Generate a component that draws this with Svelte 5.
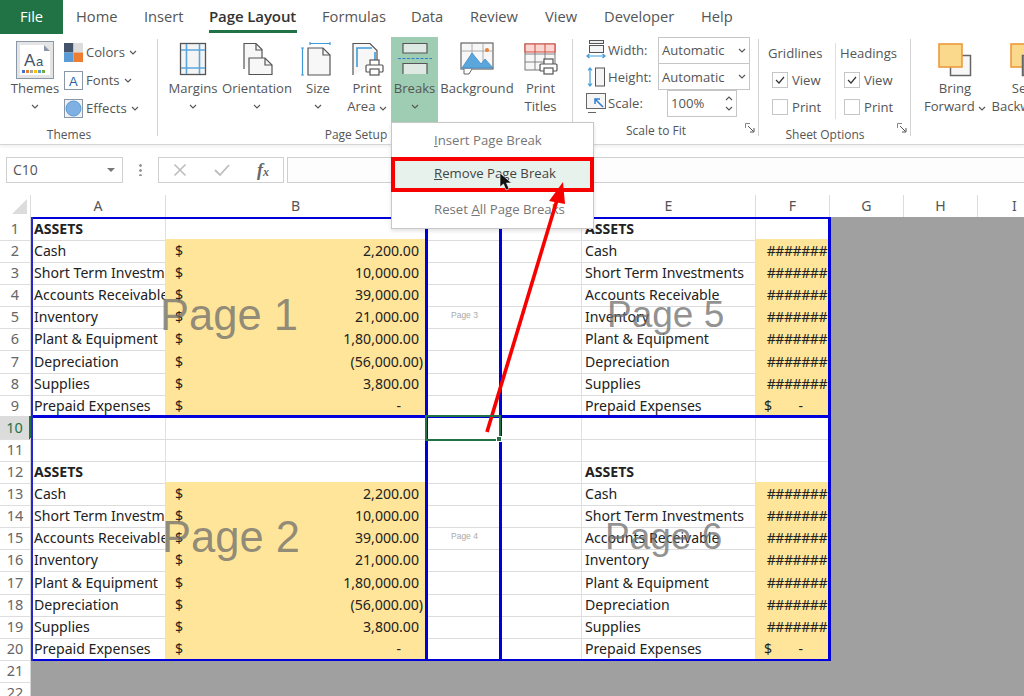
<script>
	// sheet model: columns and the repeated ledger block
	const columns = ['A', 'B', 'C', 'D', 'E', 'F', 'G', 'H', 'I'];
	const labels = [
		'Cash',
		'Short Term Investments',
		'Accounts Receivable',
		'Inventory',
		'Plant & Equipment',
		'Depreciation',
		'Supplies',
		'Prepaid Expenses'
	];
	const amounts = ['2,200.00', '10,000.00', '39,000.00', '21,000.00', '1,80,000.00', '(56,000.00)', '3,800.00', '-'];

	const rows = [];
	for (let n = 1; n <= 22; n++) {
		let index = -1;
		if (n >= 2 && n <= 9) index = n - 2;
		if (n >= 13 && n <= 20) index = n - 13;
		rows.push({
			n,
			heading: n === 1 || n === 12,
			label: index >= 0 ? labels[index] : '',
			amount: index >= 0 ? amounts[index] : '',
			filled: index >= 0,
			last: index === 7,
			negative: index === 5,
			outside: n > 20
		});
	}
</script>

{#snippet chevron()}
	<svg class="chev" viewBox="0 0 8 5" width="8" height="5"><path d="M1 1l3 3 3-3" fill="none" stroke="#555" stroke-width="1.1" /></svg>
{/snippet}

{#snippet launcher()}
	<svg class="launcher" viewBox="0 0 10 10" width="10" height="10">
		<path d="M.5 5V.5H5" fill="none" stroke="#888" />
		<path d="M3 3l5.5 5.5M9 5v4H5" fill="none" stroke="#555" />
	</svg>
{/snippet}

{#snippet printer(x, y)}
	<g transform="translate({x} {y})" fill="#fff" stroke="#555" stroke-width="1.2">
		<rect x="4" y="0" width="9" height="6" />
		<rect x="0" y="5" width="17" height="7" rx="1" />
		<rect x="4" y="9" width="9" height="6" />
	</g>
{/snippet}

<div class="app">
	<nav class="tabs">
		<div class="tab file">File</div>
		<div class="tab home">Home</div>
		<div class="tab insert">Insert</div>
		<div class="tab active">Page Layout</div>
		<div class="tab formulas">Formulas</div>
		<div class="tab data">Data</div>
		<div class="tab review">Review</div>
		<div class="tab view">View</div>
		<div class="tab developer">Developer</div>
		<div class="tab">Help</div>
	</nav>

	<section class="ribbon">
		<div class="group g-themes">
			<div class="body">
				<div class="big b-themes">
					<div class="theme-icon">
						<svg viewBox="0 0 36 36" width="36" height="36">
							<path d="M3 3h24l6 6v24H3z" fill="#fff" />
							<path d="M27 3l6 6h-6z" fill="#8a97a8" />
							<text x="7" y="24" font-size="17" fill="#44546a" font-family="Liberation Sans, sans-serif">A</text>
							<text x="19" y="24" font-size="13" fill="#44546a" font-family="Liberation Sans, sans-serif">a</text>
							<rect x="5" y="28" width="3" height="3" fill="#4472c4" />
							<rect x="9" y="28" width="3" height="3" fill="#ed7d31" />
							<rect x="13" y="28" width="3" height="3" fill="#a5a5a5" />
							<rect x="17" y="28" width="3" height="3" fill="#ffc000" />
							<rect x="21" y="28" width="3" height="3" fill="#5b9bd5" />
							<rect x="25" y="28" width="3" height="3" fill="#70ad47" />
						</svg>
					</div>
					<span class="label">Themes</span>
					{@render chevron()}
				</div>
				<div class="small-list">
					<div class="small">
						<svg viewBox="0 0 19 19" width="19" height="19">
							<rect width="9.5" height="9.5" fill="#44546a" />
							<rect x="9.5" width="9.5" height="9.5" fill="#dcdcdc" />
							<rect y="9.5" width="9.5" height="9.5" fill="#5b9bd5" />
							<rect x="9.5" y="9.5" width="9.5" height="9.5" fill="#ed7d31" />
						</svg>
						<span>Colors</span>{@render chevron()}
					</div>
					<div class="small">
						<svg viewBox="0 0 19 19" width="19" height="19">
							<rect x=".5" y=".5" width="18" height="18" fill="#fff" stroke="#8a97a8" />
							<text x="5" y="15" font-size="13" fill="#2a5f9e" font-family="Liberation Sans, sans-serif">A</text>
						</svg>
						<span>Fonts</span>{@render chevron()}
					</div>
					<div class="small">
						<svg viewBox="0 0 19 19" width="19" height="19">
							<rect x=".5" y=".5" width="18" height="18" fill="#f2f2f2" stroke="#8a97a8" />
							<circle cx="9.5" cy="9.5" r="7.5" fill="#7eb0e3" stroke="#5b9bd5" />
						</svg>
						<span>Effects</span>{@render chevron()}
					</div>
				</div>
			</div>
			<div class="caption">Themes</div>
		</div>

		<div class="group g-setup">
			<div class="body">
				<div class="big b-margins">
					<svg class="icon" viewBox="0 0 34 34" width="34" height="34">
						<rect x="4.5" y="1.5" width="25" height="31" fill="#f4f4f4" stroke="#555" stroke-width="1.3" />
						<path d="M5 8h24M5 26h24M10.5 2v30M23.5 2v30" stroke="#5ba7dd" stroke-width="1.6" fill="none" />
					</svg>
					<span class="label">Margins</span>
					{@render chevron()}
				</div>
				<div class="big b-orientation">
					<svg class="icon" viewBox="0 0 34 34" width="34" height="34">
						<path d="M4 27V1.500h12l6 6V16" fill="#f7f7f7" stroke="#555" stroke-width="1.2" />
						<path d="M16 2v6h6" fill="none" stroke="#555" stroke-width="1.2" />
						<path d="M9 16h16l7 7v9.500H9z" fill="#f7f7f7" stroke="#555" stroke-width="1.2" />
						<path d="M25 16v7h7" fill="none" stroke="#555" stroke-width="1.2" />
					</svg>
					<span class="label">Orientation</span>
					{@render chevron()}
				</div>
				<div class="big b-size">
					<svg class="icon" viewBox="0 0 34 34" width="34" height="34">
						<path d="M9 1.500h20M9 0v3M29 0v3M1.500 6v27M0 6h3M0 33h3" stroke="#3f9bd8" stroke-width="1.2" fill="none" />
						<path d="M7 33V6h15l7 7v20z" fill="#f7f7f7" stroke="#555" stroke-width="1.2" />
						<path d="M22 6v7h7" fill="none" stroke="#555" stroke-width="1.2" />
					</svg>
					<span class="label">Size</span>
					{@render chevron()}
				</div>
				<div class="big b-print">
					<svg class="icon" viewBox="0 0 34 34" width="34" height="34">
						<path d="M3 33V1.500h17l7 7V20" fill="#f7f7f7" stroke="#555" stroke-width="1.2" />
						<path d="M7 25V6h15M25 10v8" fill="none" stroke="#3f9bd8" stroke-width="1.6" />
						{@render printer(16, 18)}
					</svg>
					<span class="label">Print<br />Area {@render chevron()}</span>
				</div>
				<div class="big b-breaks">
					<svg class="icon" viewBox="0 0 34 34" width="34" height="34">
						<path d="M5 1.500h24V11H5z" fill="#dfe9e3" stroke="#555" stroke-width="1.2" />
						<path d="M0 16.500h34" stroke="#2d7fd0" stroke-width="1.2" stroke-dasharray="3 1.500" />
						<path d="M5 32V21.500h24V32" fill="#dfe9e3" stroke="#555" stroke-width="1.2" />
					</svg>
					<span class="label">Breaks</span>
					{@render chevron()}
				</div>
				<div class="big b-background">
					<svg class="icon" viewBox="0 0 34 34" width="34" height="34">
						<rect x="1" y="1" width="32" height="26" fill="#f7f7f7" stroke="#666" stroke-width="1.2" />
						<path d="M1 9h32M12 1v26M23 1v26" stroke="#999" stroke-width=".8" />
						<path d="M2 26l10-15 9 11 4-5 8 9z" fill="#5ba7dd" stroke="#3e86c0" stroke-width=".8" />
						<circle cx="27" cy="8" r="2" fill="#ed7d31" />
						<path d="M4 27v5h5l3-5" fill="#fff" stroke="#666" />
					</svg>
					<span class="label">Background</span>
				</div>
				<div class="big b-titles">
					<svg class="icon" viewBox="0 0 34 34" width="34" height="34">
						<rect x="1" y="2" width="30" height="26" fill="#f7f7f7" stroke="#777" />
						<path d="M1 12h30M1 20h22M11 2v26M21 2v26" stroke="#777" stroke-width=".9" />
						<path d="M1 2h30v8H1z" fill="#f8d7d2" stroke="#d9463a" stroke-width="1.2" />
						<path d="M11 2v8M21 2v8" stroke="#d9463a" />
						{@render printer(16, 17)}
					</svg>
					<span class="label">Print<br />Titles</span>
				</div>
			</div>
			<div class="caption setup-caption">Page Setup</div>
		</div>

		<div class="group g-scale">
			<div class="scale-grid">
				<svg viewBox="0 0 20 20" width="20" height="20">
					<rect x="3.500" y=".5" width="14" height="3" fill="#eee" stroke="#555" />
					<rect x="3.500" y="5.500" width="14" height="7" fill="#f5f5f5" stroke="#555" />
					<path d="M1 16h18M3.500 14l-2.500 2 2.500 2M16.500 14l2.500 2-2.500 2" fill="none" stroke="#3f9bd8" stroke-width="1.2" />
				</svg>
				<span>Width:</span>
				<div class="select wide">Automatic {@render chevron()}</div>
				<svg viewBox="0 0 20 20" width="20" height="20">
					<rect x="9.500" y="1" width="9" height="18" fill="#f5f5f5" stroke="#555" />
					<path d="M4 1v18M2 3.500l2-2.500 2 2.500M2 16.500l2 2.500 2-2.500" fill="none" stroke="#3f9bd8" stroke-width="1.2" />
				</svg>
				<span>Height:</span>
				<div class="select wide">Automatic {@render chevron()}</div>
				<svg viewBox="0 0 20 20" width="20" height="20">
					<rect x=".5" y=".5" width="19" height="15" fill="#f5f5f5" stroke="#666" />
					<path d="M2 19.500h8" stroke="#666" />
					<path d="M9 6l8 8M9 11V6h5" fill="none" stroke="#2d7fd0" stroke-width="1.500" />
				</svg>
				<span>Scale:</span>
				<div class="select percent">
					100%
					<div class="spin">
						<svg viewBox="0 0 8 5" width="8" height="5"><path d="M1 4l3-3 3 3" fill="none" stroke="#555" stroke-width="1.1" /></svg>
						{@render chevron()}
					</div>
				</div>
			</div>
			<div class="caption">Scale to Fit</div>
			{@render launcher()}
		</div>

		<div class="group g-sheet">
			<div class="options">
				<div class="option-col">
					<div class="option-title">Gridlines</div>
					<div class="check"><span class="box"><svg viewBox="0 0 10 8" width="10" height="8"><path d="M1 4l3 3 5-6" fill="none" stroke="#333" stroke-width="1.2" /></svg></span>View</div>
					<div class="check"><span class="box"></span>Print</div>
				</div>
				<div class="option-col second">
					<div class="option-title">Headings</div>
					<div class="check"><span class="box"><svg viewBox="0 0 10 8" width="10" height="8"><path d="M1 4l3 3 5-6" fill="none" stroke="#333" stroke-width="1.2" /></svg></span>View</div>
					<div class="check"><span class="box"></span>Print</div>
				</div>
			</div>
			<div class="caption">Sheet Options</div>
			{@render launcher()}
		</div>

		<div class="group g-arrange">
			<div class="body">
				<div class="big b-arrange">
					<svg class="icon arrange-icon" viewBox="0 0 34 34" width="34" height="34">
						<rect x="12.500" y="12.500" width="20" height="20" fill="#f7f7f7" stroke="#666" stroke-width="1.500" />
						<rect x="1" y="1" width="23" height="23" fill="#fad98d" stroke="#ed9a3c" stroke-width="1.600" />
					</svg>
					<span class="label">Bring<br />Forward {@render chevron()}</span>
				</div>
				<div class="big b-arrange">
					<svg class="icon arrange-icon" viewBox="0 0 34 34" width="34" height="34">
						<rect x="1" y="1" width="23" height="23" fill="#fad98d" stroke="#ed9a3c" stroke-width="1.600" />
						<rect x="12.500" y="12.500" width="20" height="20" fill="#888" stroke="#666" stroke-width="1.500" />
					</svg>
					<span class="label">Send<br />Backward {@render chevron()}</span>
				</div>
			</div>
		</div>
	</section>

	<section class="formula-bar">
		<div class="name-box">C10<span class="caret"></span></div>
		<div class="dots"></div>
		<div class="fx-box">
			<svg viewBox="0 0 14 14" width="14" height="14"><path d="M1.500 1.500l11 11M12.500 1.500l-11 11" stroke="#bdbdbd" stroke-width="1.600" /></svg>
			<svg viewBox="0 0 16 14" width="16" height="14"><path d="M1 7l5 5 9-10" fill="none" stroke="#bdbdbd" stroke-width="1.800" /></svg>
			<span class="fx">f<small>x</small></span>
		</div>
		<div class="formula-input"></div>
	</section>

	<section class="sheet">
		<div class="col-heads">
			<div class="corner"><span></span></div>
			{#each columns as c}
				<div class="col-head" class:sel={c === 'C'}>{c}</div>
			{/each}
		</div>
		{#each rows as r}
			<div class="row">
				<div class="row-head" class:sel={r.n === 10}>{r.n}</div>
				{#if r.outside}
					<div class="outside"></div>
				{:else}
					<div class="cell clip" class:bold={r.heading}>{r.heading ? 'ASSETS' : r.label}</div>
					<div class="cell" class:fill={r.filled}>
						{#if r.filled}
							<span class="dollar">$</span>
							<span class="amount" class:neg={r.negative} class:dash={r.last}>{r.amount}</span>
						{/if}
					</div>
					<div class="cell" class:selected={r.n === 10}></div>
					<div class="cell"></div>
					<div class="cell" class:bold={r.heading}>{r.heading ? 'ASSETS' : r.label}</div>
					<div class="cell" class:fill={r.filled}>
						{#if r.last}
							<span class="dollar short">$</span>
							<span class="amount dash-f">-</span>
						{:else if r.filled}
							<span class="hashes">#######</span>
						{/if}
					</div>
					<div class="outside"></div>
				{/if}
			</div>
		{/each}

		<!-- page break preview overlay -->
		<div class="break h top"></div>
		<div class="break h middle"></div>
		<div class="break h bottom"></div>
		<div class="break v left"></div>
		<div class="break v c1"></div>
		<div class="break v c2"></div>
		<div class="break v right"></div>

		<div class="mark big-mark p1">Page 1</div>
		<div class="mark big-mark p2">Page 2</div>
		<div class="mark big-mark wide-col p5">Page 5</div>
		<div class="mark big-mark wide-col p6">Page 6</div>
		<div class="mark tiny p3">Page 3</div>
		<div class="mark tiny p4">Page 4</div>
	</section>

	<div class="menu">
		<div class="item"><span class="dim"><u>I</u>nsert Page Break</span></div>
		<div class="item hot"><span><u>R</u>emove Page Break</span></div>
		<div class="item"><span class="dim">Reset <u>A</u>ll Page Breaks</span></div>
	</div>

	<svg class="annotation" viewBox="0 0 1024 696" width="1024" height="696">
		<path d="M487 432L557 200" stroke="#f70000" stroke-width="3.600" fill="none" />
		<path d="M563 182L549 201 565 204z" fill="#f70000" />
		<path d="M500 173v14l3.500-3 2.500 6 3-1.300-2.500-5.700h5z" fill="#111" stroke="#fff" stroke-width=".6" />
	</svg>
</div>

<style>
	:global(body) {
		margin: 0;
		background: #fff;
	}

	.app {
		position: relative;
		width: 1024px;
		height: 696px;
		overflow: hidden;
		font-family: 'Open Sans', 'Noto Sans', sans-serif;
		color: #555;
		background: #fff;
	}

	/* tabs */
	.tabs {
		display: flex;
		height: 37px;
		font-size: 14.7px;
		color: #555;
	}

	.tab {
		height: 34px;
		line-height: 33px;
		box-sizing: border-box;
	}

	.file {
		width: 63px;
		background: #217346;
		color: #fff;
		text-align: center;
		margin-right: 13px;
	}

	.home {
		width: 68px;
	}

	.insert {
		width: 65px;
	}

	.active {
		width: 88px;
		margin-right: 25px;
		font-weight: 600;
		color: #333;
		white-space: nowrap;
		border-bottom: 3px solid #217346;
		height: 33px;
		font-size: 15px;
		letter-spacing: -0.1px;
	}

	.formulas {
		width: 89px;
	}

	.data {
		width: 59px;
	}

	.review {
		width: 75px;
	}

	.view {
		width: 59px;
	}

	.developer {
		width: 97px;
	}

	/* ribbon */
	.ribbon {
		display: flex;
		height: 108px;
		font-size: 13.1px;
		line-height: 18px;
		border-bottom: 1px solid #d5d5d5;
		box-shadow: 0 2px 3px rgba(0, 0, 0, 0.06);
		box-sizing: border-box;
		color: #555;
	}

	.group {
		position: relative;
		display: flex;
		flex-direction: column;
		flex: none;
		box-sizing: border-box;
		height: 102px;
	}

	.group::after {
		content: '';
		position: absolute;
		right: 0;
		top: 2px;
		bottom: 3px;
		width: 1px;
		background: #d4d4d4;
	}

	.body {
		display: flex;
		height: 85px;
		flex: none;
	}

	.caption {
		font-size: 12px;
		line-height: 16px;
		text-align: center;
		margin-top: 5px;
		padding-right: 20px;
	}

	.setup-caption {
		padding-right: 26px;
	}

	.launcher {
		position: absolute;
		right: 4px;
		bottom: 6px;
	}

	.g-themes {
		width: 158px;
	}

	.g-setup {
		width: 415px;
		padding-left: 7px;
	}

	.g-scale {
		width: 186px;
	}

	.g-sheet {
		width: 152px;
	}

	.g-arrange {
		width: 120px;
	}

	.g-arrange::after {
		display: none;
	}

	.big {
		display: flex;
		flex-direction: column;
		align-items: center;
		flex: none;
		white-space: nowrap;
		text-align: center;
	}

	.icon {
		margin-top: 5px;
		margin-bottom: 3px;
		flex: none;
	}

	.label {
		display: block;
	}

	.big > .chev {
		margin-top: 7px;
	}

	.b-themes {
		width: 70px;
	}

	.theme-icon {
		width: 36px;
		height: 36px;
		margin-top: 4px;
		background: #e4e4e4;
		border: 1px solid #8a97a8;
		box-sizing: content-box;
	}

	.b-margins {
		width: 56px;
	}

	.b-orientation {
		width: 72px;
	}

	.b-size {
		width: 50px;
	}

	.b-print {
		width: 48px;
	}

	.b-breaks {
		width: 47px;
		background: #9fcdb3;
	}

	.b-background {
		width: 78px;
	}

	.b-titles {
		width: 49px;
	}

	.b-arrange {
		width: 72px;
	}

	.b-arrange:first-child {
		margin-left: 8px;
	}

	.arrange-icon {
		margin-top: 6px;
		margin-bottom: 2px;
	}

	.small-list {
		display: flex;
		flex-direction: column;
		margin-left: -6px;
		padding-top: 5px;
		gap: 8px;
	}

	.small {
		display: flex;
		align-items: center;
		gap: 3px;
		height: 20px;
	}

	.small .chev {
		margin-left: 1px;
	}

	/* scale to fit */
	.scale-grid {
		display: grid;
		grid-template-columns: 20px 48px 92px;
		grid-auto-rows: 26.5px;
		column-gap: 2px;
		align-items: center;
		height: 85px;
		padding-left: 13px;
	}

	.select {
		display: flex;
		align-items: center;
		justify-content: space-between;
		box-sizing: border-box;
		height: 27px;
		padding: 0 3px 0 3px;
		background: #fff;
		border: 1px solid #c6c6c6;
		font-size: 13.1px;
	}

	.wide {
		width: 92px;
	}

	.percent {
		width: 70px;
		margin-left: 9px;
		padding-left: 3px;
	}

	.spin {
		display: flex;
		flex-direction: column;
		gap: 5px;
	}

	/* sheet options */
	.options {
		display: flex;
		height: 85px;
		flex: none;
	}

	.option-col {
		width: 76px;
		padding: 6px 0 0 9px;
		box-sizing: border-box;
		height: 76px;
		margin-top: 6px;
	}

	.second {
		border-left: 1px solid #dedede;
		padding-left: 4px;
		width: 72px;
	}

	.option-title {
		line-height: 18px;
		margin-top: -5px;
		margin-bottom: 4px;
		white-space: nowrap;
	}

	.check {
		display: flex;
		align-items: center;
		gap: 4px;
		height: 27px;
		padding-left: 4px;
	}

	.box {
		display: flex;
		align-items: center;
		justify-content: center;
		width: 14px;
		height: 14px;
		border: 1px solid #c6c6c6;
		background: #fff;
	}

	/* formula bar */
	.formula-bar {
		display: flex;
		align-items: stretch;
		height: 26px;
		margin-top: 12px;
		margin-bottom: 12px;
		padding-left: 6px;
		font-size: 14px;
	}

	.name-box {
		position: relative;
		width: 117px;
		box-sizing: border-box;
		border: 1px solid #d0d0d0;
		padding-left: 6px;
		line-height: 24px;
	}

	.caret {
		position: absolute;
		right: 7px;
		top: 10px;
		border: 4px solid transparent;
		border-top-color: #777;
	}

	.dots {
		width: 3px;
		height: 13px;
		margin: 6px 16px 0 16px;
		background: radial-gradient(circle, #999 1.300px, transparent 1.500px) 0 0 / 3px 5px;
	}

	.fx-box {
		display: flex;
		align-items: center;
		justify-content: space-between;
		width: 126px;
		padding: 0 14px;
		box-sizing: border-box;
		border: 1px solid #d0d0d0;
	}

	.fx {
		font-family: 'Liberation Serif', serif;
		font-style: italic;
		font-weight: 700;
		font-size: 18px;
		color: #666;
	}

	.fx small {
		font-size: 12px;
	}

	.formula-input {
		flex: 1;
		margin-left: 3px;
		border: 1px solid #d0d0d0;
		border-right: 0;
		background: #fdfdfd;
	}

	/* sheet */
	.sheet {
		position: relative;
		font-family: 'Noto Sans', 'Open Sans', sans-serif;
		font-size: 14.1px;
		color: #222;
	}

	.col-heads,
	.row {
		display: grid;
		grid-template-columns: 31px 135px 260px 74px 82px 174px 74px 74px 74px 74px;
	}

	.col-heads {
		height: 22px;
	}

	.corner {
		position: relative;
		border-right: 1px solid #ddd;
		background: #fff;
	}

	.corner span {
		position: absolute;
		right: 3px;
		bottom: 3px;
		border-style: solid;
		border-width: 0 0 15px 15px;
		border-color: transparent transparent #dcdcdc transparent;
	}

	.col-head {
		box-sizing: border-box;
		border-right: 1px solid #dcdcdc;
		text-align: center;
		line-height: 21px;
		color: #555;
	}

	.col-head.sel {
		background: #d9d9d9;
		color: #217346;
	}

	.row {
		height: 22.1px;
		box-sizing: border-box;
	}

	.row-head {
		box-sizing: border-box;
		text-align: center;
		color: #666;
		font-size: 14.5px;
		line-height: 23px;
		border-right: 1px solid #d4d4d4;
		border-bottom: 1px solid #dedede;
	}

	.row-head.sel {
		background: #dcdcdc;
		color: #217346;
		border-right: 2px solid #217346;
	}

	.cell {
		position: relative;
		box-sizing: border-box;
		padding-left: 3px;
		line-height: 24px;
		white-space: nowrap;
		border-right: 1px solid #e0e0e0;
		border-bottom: 1px solid #dcdcdc;
		overflow: hidden;
	}

	.bold {
		font-weight: 700;
	}

	.fill {
		background: #ffe599;
		border-color: #ffe599;
		display: flex;
		justify-content: space-between;
		padding: 0 6px 0 9px;
	}

	.neg {
		margin-right: -4px;
	}

	.dash {
		margin-right: 18px;
	}

	.dollar.short {
		margin-left: -1px;
	}

	.amount.dash-f {
		margin-right: 20px;
	}

	.hashes {
		margin-left: auto;
		margin-right: -4px;
		letter-spacing: -0.5px;
	}

	.selected {
		z-index: 1;
		overflow: visible;
		outline: 2px solid #217346;
		outline-offset: -1px;
	}

	.selected::after {
		content: '';
		position: absolute;
		right: -3px;
		bottom: -3px;
		width: 6px;
		height: 6px;
		background: #217346;
		border: 1px solid #fff;
		box-sizing: border-box;
	}

	.outside {
		background: #a0a0a0;
	}

	.cell ~ .outside {
		grid-column: 8 / -1;
	}

	.row-head + .outside {
		grid-column: 2 / -1;
	}

	.break {
		position: absolute;
		background: #0000d8;
	}

	.h {
		left: 31px;
		width: 800px;
		height: 2.500px;
	}

	.top {
		top: 22px;
		height: 2px;
	}

	.middle {
		top: 220px;
	}

	.bottom {
		top: 463.500px;
	}

	.v {
		top: 22px;
		height: 444px;
		width: 3px;
	}

	.left {
		left: 31px;
		width: 2px;
		background: #2828c8;
	}

	.c1 {
		left: 425px;
	}

	.c2 {
		left: 499px;
	}

	.right {
		left: 828px;
	}

	.mark {
		position: absolute;
		font-family: 'Liberation Sans', Arial, sans-serif;
		white-space: nowrap;
		pointer-events: none;
	}

	.big-mark {
		font-size: 43.500px;
		line-height: 50px;
		color: rgba(110, 110, 110, 0.75);
	}

	.wide-col {
		font-size: 37px;
	}

	.tiny {
		font-size: 8.500px;
		line-height: 10px;
		color: #aaa;
	}

	.p1 {
		left: 160px;
		top: 95px;
	}

	.p2 {
		left: 162px;
		top: 317px;
	}

	.p5 {
		left: 607px;
		top: 95px;
	}

	.p6 {
		left: 605px;
		top: 317px;
	}

	.p3 {
		left: 451px;
		top: 115px;
	}

	.p4 {
		left: 451px;
		top: 336px;
	}

	/* breaks dropdown */
	.menu {
		position: absolute;
		left: 391px;
		top: 122px;
		width: 203px;
		height: 107px;
		box-sizing: border-box;
		background: #fff;
		border: 1px solid #c8c8c8;
		box-shadow: 0 2px 4px rgba(0, 0, 0, 0.12);
		font-size: 13.200px;
		color: #444;
		display: flex;
		flex-direction: column;
	}

	.item {
		height: 36px;
		line-height: 34px;
		padding-left: 42px;
		box-sizing: border-box;
		white-space: nowrap;
	}

	.item:first-child {
		height: 34px;
	}

	.dim {
		color: #777;
	}

	.hot {
		height: 35px;
		line-height: 33px;
		background: #e8f2ec;
		outline: 4px solid #f70000;
		outline-offset: -4px;
		margin: 0 -1px;
		padding-left: 43px;
	}

	.annotation {
		position: absolute;
		left: 0;
		top: 0;
		pointer-events: none;
	}
</style>
